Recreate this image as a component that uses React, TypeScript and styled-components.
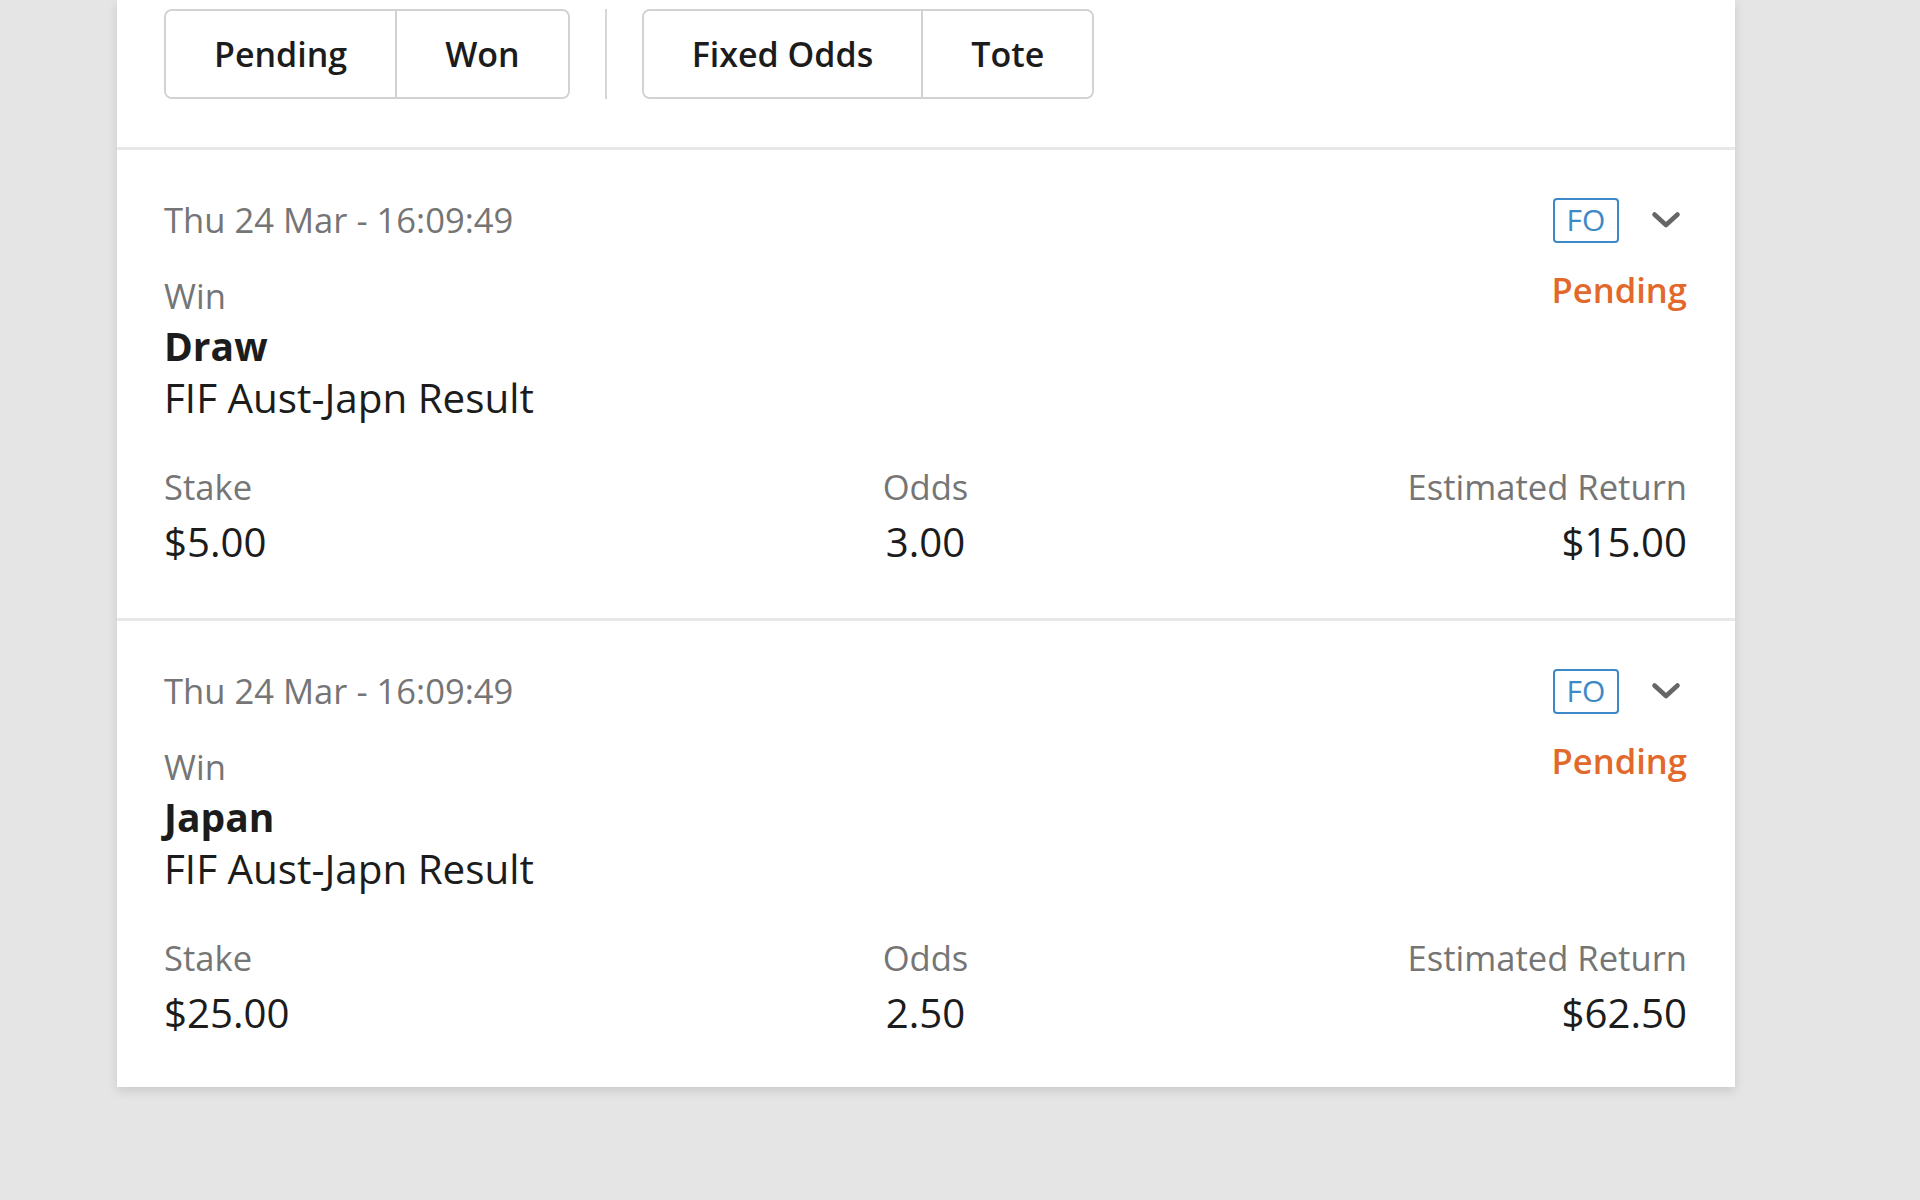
import React from "react";
import styled, { createGlobalStyle } from "styled-components";

const GlobalStyle = createGlobalStyle`
  html, body {
    margin: 0;
    padding: 0;
    background: #e5e5e5;
    font-family: "Open Sans", "Noto Sans", sans-serif;
  }
  body { min-height: 1200px; }
  * { box-sizing: border-box; }
`;

const Page = styled.div`
  min-height: 1200px;
  padding-left: 117px;
`;

const Card = styled.div`
  width: 1618px;
  background: #ffffff;
  box-shadow: 0 4px 10px rgba(0, 0, 0, 0.12);
`;

const FilterBar = styled.div`
  display: flex;
  align-items: stretch;
  gap: 35px;
  padding: 9px 48px 48px 47px;
`;

const SegmentGroup = styled.div`
  display: inline-flex;
  height: 90px;
  border: 2px solid #d2d2d2;
  border-radius: 8px;
  overflow: hidden;
`;

const Segment = styled.button<{ $first?: boolean }>`
  height: 100%;
  padding: 0 48px;
  border: none;
  border-left: ${(p) => (p.$first ? "none" : "2px solid #d2d2d2")};
  background: #ffffff;
  font-family: "Open Sans", "Noto Sans", sans-serif;
  font-size: 34px;
  font-weight: 600;
  color: #1c1c1c;
  cursor: pointer;
`;

const VDivider = styled.div`
  width: 2px;
  background: #d6d6d6;
`;

const BetRow = styled.div`
  border-top: 3px solid #e8e8e8;
  padding: 46px 48px 46px 47px;
  &:last-child {
    padding-bottom: 44px;
  }
`;

const Header = styled.div`
  display: flex;
  justify-content: space-between;
  align-items: center;
  height: 48px;
`;

const DateText = styled.div`
  font-size: 34.6px;
  line-height: 48px;
  color: #757575;
`;

const HeaderRight = styled.div`
  display: flex;
  align-items: center;
  gap: 26px;
`;

const Badge = styled.span`
  display: inline-flex;
  align-items: center;
  justify-content: center;
  width: 66px;
  height: 45px;
  border: 2.5px solid #3d89c8;
  border-radius: 4px;
  font-size: 30px;
  color: #3d89c8;
  line-height: 1;
`;

const ChevronBox = styled.span`
  width: 42px;
  height: 40px;
  display: inline-flex;
  align-items: center;
  justify-content: center;
`;

const Body = styled.div`
  display: flex;
  justify-content: space-between;
  align-items: flex-start;
  margin-top: 28px;
`;

const Info = styled.div`
  display: flex;
  flex-direction: column;
`;

const BetType = styled.div`
  font-size: 34.6px;
  line-height: 48px;
  color: #757575;
`;

const Selection = styled.div`
  font-size: 39px;
  font-weight: 700;
  line-height: 52px;
  color: #1c1c1c;
`;

const Market = styled.div`
  font-size: 40.4px;
  line-height: 52px;
  color: #1c1c1c;
`;

const Status = styled.div`
  font-size: 34.6px;
  font-weight: 600;
  line-height: 36px;
  color: #e2692b;
`;

const Stats = styled.div`
  display: grid;
  grid-template-columns: 1fr auto 1fr;
  margin-top: 38px;
`;

const Stat = styled.div<{ $align: "left" | "center" | "right" }>`
  display: flex;
  flex-direction: column;
  text-align: ${(p) => p.$align};
`;

const StatLabel = styled.div`
  font-size: 34.6px;
  line-height: 50px;
  color: #757575;
`;

const StatValue = styled.div`
  font-size: 40.2px;
  line-height: 60px;
  color: #1c1c1c;
`;

const Chevron = () => (
  <svg width="30" height="18" viewBox="0 0 30 18" fill="none">
    <polyline
      points="3.5,3.5 15,14 26.5,3.5"
      stroke="#666666"
      strokeWidth="4.6"
      strokeLinecap="round"
      strokeLinejoin="round"
    />
  </svg>
);

type Bet = {
  date: string;
  type: string;
  selection: string;
  market: string;
  status: string;
  stake: string;
  odds: string;
  ret: string;
};

const bets: Bet[] = [
  {
    date: "Thu 24 Mar - 16:09:49",
    type: "Win",
    selection: "Draw",
    market: "FIF Aust-Japn Result",
    status: "Pending",
    stake: "$5.00",
    odds: "3.00",
    ret: "$15.00",
  },
  {
    date: "Thu 24 Mar - 16:09:49",
    type: "Win",
    selection: "Japan",
    market: "FIF Aust-Japn Result",
    status: "Pending",
    stake: "$25.00",
    odds: "2.50",
    ret: "$62.50",
  },
];

export default function App() {
  return (
    <>
      <GlobalStyle />
      <Page>
        <Card>
          <FilterBar>
            <SegmentGroup>
              <Segment $first>Pending</Segment>
              <Segment>Won</Segment>
            </SegmentGroup>
            <VDivider />
            <SegmentGroup>
              <Segment $first>Fixed Odds</Segment>
              <Segment>Tote</Segment>
            </SegmentGroup>
          </FilterBar>
          {bets.map((b, i) => (
            <BetRow key={i}>
              <Header>
                <DateText>{b.date}</DateText>
                <HeaderRight>
                  <Badge>FO</Badge>
                  <ChevronBox>
                    <Chevron />
                  </ChevronBox>
                </HeaderRight>
              </Header>
              <Body>
                <Info>
                  <BetType>{b.type}</BetType>
                  <Selection>{b.selection}</Selection>
                  <Market>{b.market}</Market>
                </Info>
                <Status>{b.status}</Status>
              </Body>
              <Stats>
                <Stat $align="left">
                  <StatLabel>Stake</StatLabel>
                  <StatValue>{b.stake}</StatValue>
                </Stat>
                <Stat $align="center">
                  <StatLabel>Odds</StatLabel>
                  <StatValue>{b.odds}</StatValue>
                </Stat>
                <Stat $align="right">
                  <StatLabel>Estimated Return</StatLabel>
                  <StatValue>{b.ret}</StatValue>
                </Stat>
              </Stats>
            </BetRow>
          ))}
        </Card>
      </Page>
    </>
  );
}
